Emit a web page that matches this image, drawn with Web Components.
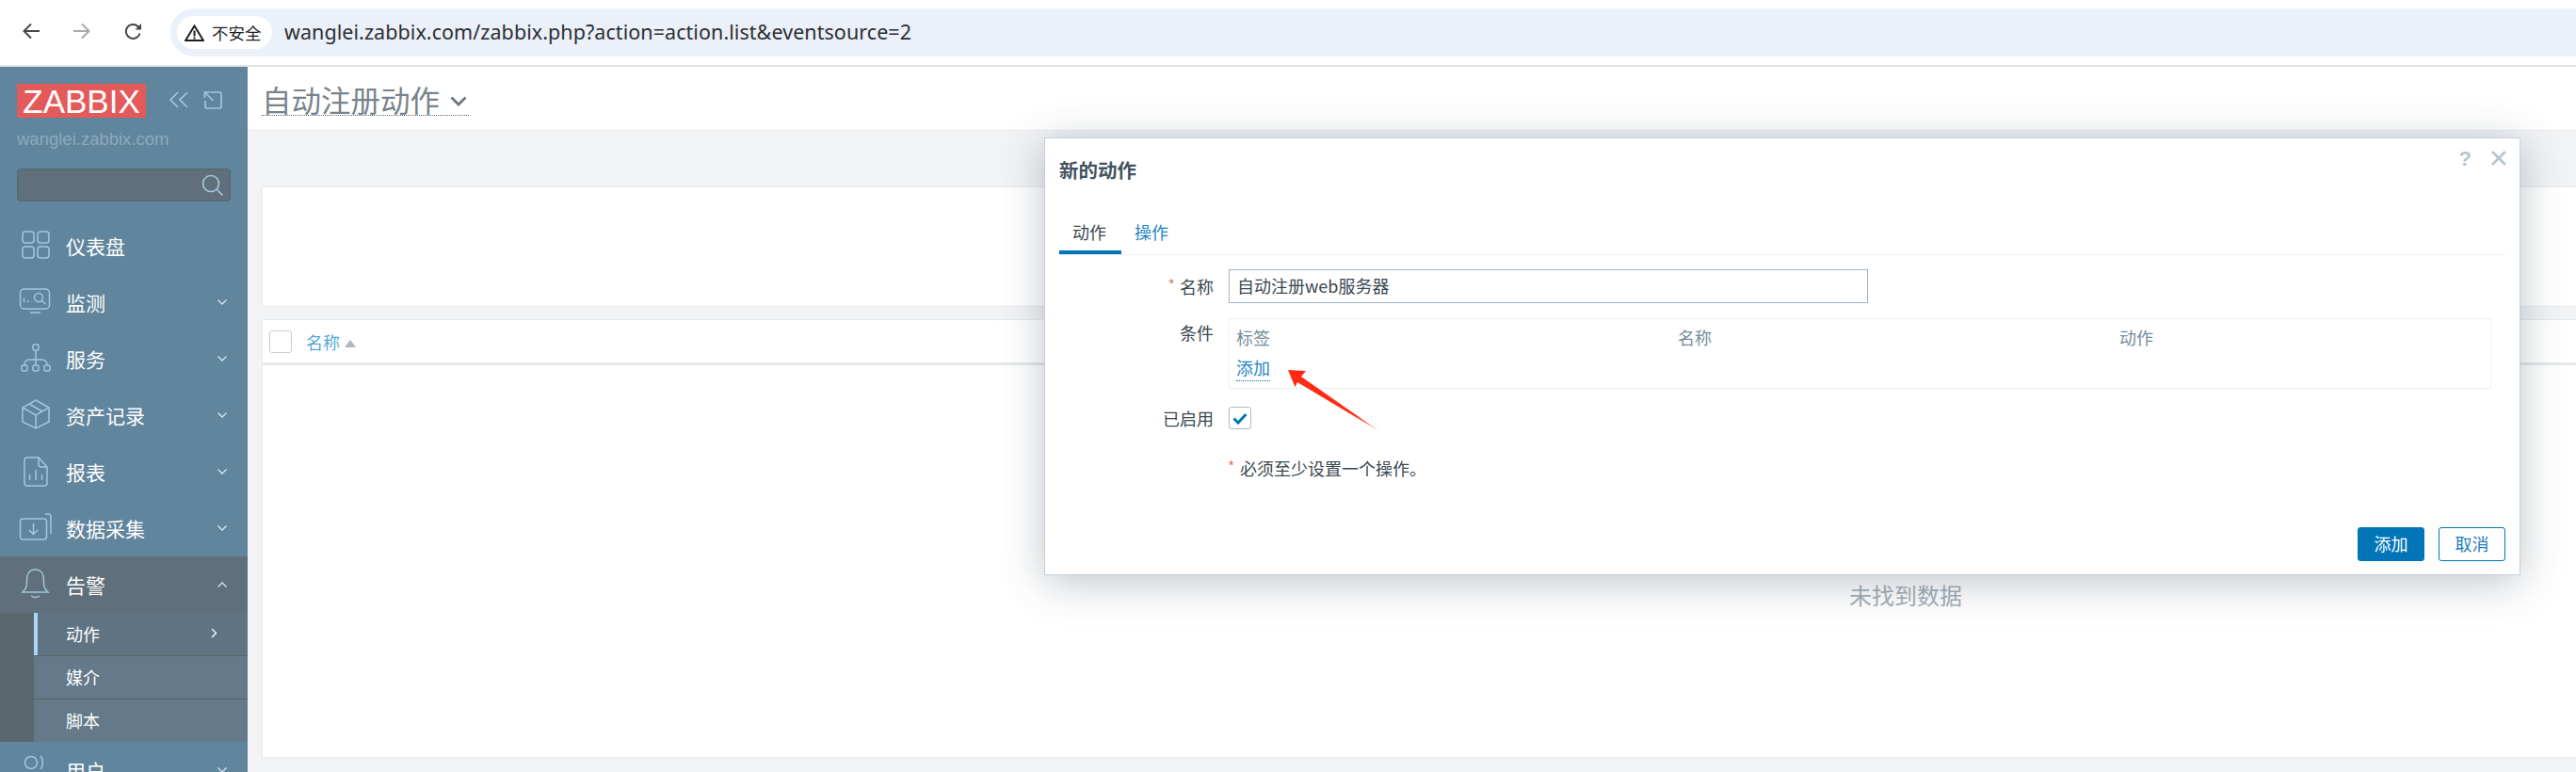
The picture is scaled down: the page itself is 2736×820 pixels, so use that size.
<!DOCTYPE html>
<html lang="zh-CN">
<head>
<meta charset="utf-8">
<title>自动注册动作</title>
<style>
html,body{margin:0;padding:0;height:820px;overflow:hidden;background:#fff;font-family:"Liberation Sans","Noto Sans CJK SC",sans-serif;}
.app{display:flex;flex-direction:column;height:820px;position:relative;overflow:hidden;}
.row{display:flex;flex:1;min-height:0;}
</style>
</head>
<body>
<div class="app">
  <browser-bar url="wanglei.zabbix.com/zabbix.php?action=action.list&amp;eventsource=2"></browser-bar>
  <div class="row">
    <zbx-sidebar>
      <nav-item label="仪表盘" nochev><svg slot="icon" viewBox="0 0 36 36"><rect x="5" y="3" width="12" height="12" rx="3"/><rect x="21" y="3" width="12" height="12" rx="3"/><rect x="5" y="19" width="12" height="12" rx="3"/><rect x="21" y="19" width="12" height="12" rx="3"/></svg></nav-item>
      <nav-item label="监测"><svg slot="icon" viewBox="0 0 36 36"><rect x="2.5" y="4" width="31" height="21" rx="4"/><path d="M13 29h11M6.500 18v-4M10.500 18v-2M14.500 18v-.5"/><circle cx="22" cy="13" r="4.500"/><path d="M25.500 16.500l4 3.500"/></svg></nav-item>
      <nav-item label="服务"><svg slot="icon" viewBox="0 0 36 36"><rect x="16" y="3" width="6" height="6" rx="1.500"/><rect x="4" y="25" width="6" height="6" rx="1.500"/><rect x="16" y="25" width="6" height="6" rx="1.500"/><rect x="28" y="25" width="6" height="6" rx="1.500"/><path d="M19 9v16M7 25v-1a5 5 0 0 1 5-5h14a5 5 0 0 1 5 5v1"/></svg></nav-item>
      <nav-item label="资产记录"><svg slot="icon" viewBox="0 0 36 36"><path d="M19 2l14 8v15l-14 7-14-7V10zM5 10l14 8 14-8M19 18v14M12 6l14 8"/></svg></nav-item>
      <nav-item label="报表"><svg slot="icon" viewBox="0 0 36 36"><path d="M10 3h12l9 10v17a3 3 0 0 1-3 3H10a3 3 0 0 1-3-3V6a3 3 0 0 1 3-3zM22 3v7a3 3 0 0 0 3 3h6M12.500 21v6M19 16v11M25.500 21v6"/></svg></nav-item>
      <nav-item label="数据采集"><svg slot="icon" viewBox="0 0 36 36"><rect x="2.500" y="8" width="28" height="22" rx="3"/><path d="M16.500 13v11M12 20l4.500 4.500L21 20M29 3h3a3 3 0 0 1 3 3v18"/></svg></nav-item>
      <nav-item label="告警" open><svg slot="icon" viewBox="0 0 36 36"><path d="M18.500 2c-6.500 0-9 5-9 10.500V17c0 4-2.500 7-4.500 9h27c-2-2-4.500-5-4.500-9v-4.500C27.500 7 25 2 18.500 2zM14 30q4.500 3 9 0"/></svg>
        <sub-item slot="sub" selected>动作</sub-item>
        <sub-item slot="sub">媒介</sub-item>
        <sub-item slot="sub">脚本</sub-item>
      </nav-item>
      <nav-item label="用户"><svg slot="icon" viewBox="0 0 36 36"><circle cx="14" cy="10" r="6.500"/><path d="M24 3c3 3 3 11 0 14"/></svg></nav-item>
    </zbx-sidebar>
    <zbx-page heading="自动注册动作" empty="未找到数据"></zbx-page>
  </div>
  <zbx-modal heading="新的动作"></zbx-modal>
  <red-arrow></red-arrow>
</div>
<script>
function def(name, css, html, init){
  customElements.define(name, class extends HTMLElement{
    connectedCallback(){
      if(this.shadowRoot) return;
      const r=this.attachShadow({mode:'open'});
      r.innerHTML='<style>'+css+'</style>'+(typeof html==='function'?html(this):html);
      if(init) init(this,r);
    }
  });
}
const attr=(s)=>String(s||'').replace(/&/g,'&amp;').replace(/</g,'&lt;');

def('browser-bar',`
:host{display:flex;align-items:center;height:71px;box-sizing:border-box;border-bottom:2px solid #e2e2e2;background:#fff;flex:none;padding-left:24px;padding-bottom:3px;}
svg{display:block;flex:none}
.nav{display:flex;align-items:center;gap:36px;margin-right:30px}
.pill{flex:1;height:51px;background:#ebf0f9;border-radius:25px 0 0 25px;display:flex;align-items:center;padding-left:7px;margin-top:3px}
.chip{display:flex;align-items:center;height:35px;width:101px;background:#fff;border-radius:18px;box-sizing:border-box;padding-left:8px;gap:8px;font:17.500px "Noto Sans CJK SC",sans-serif;color:#1f1f1f}
.url{margin-left:13px;margin-top:-2px;font:21.500px "Noto Sans","Liberation Sans",sans-serif;letter-spacing:.06px;color:#2c2f33;white-space:nowrap}
`,(h)=>`
<div class="nav">
<svg width="18" height="18" viewBox="0 0 18 18" fill="none" stroke="#474747" stroke-width="2"><path d="M18 9H2M9 1.500L1.500 9 9 16.500"/></svg>
<svg width="18" height="18" viewBox="0 0 18 18" fill="none" stroke="#a9a9a9" stroke-width="2"><path d="M0 9h16M9 1.500L16.500 9 9 16.500"/></svg>
<svg width="19" height="19" viewBox="0 0 19 19" fill="none" stroke="#474747" stroke-width="2"><path d="M16.500 11.500A7.500 7.500 0 1 1 14.500 4L17 6.500"/><path d="M18 1v6.500h-6.500" fill="#474747" stroke="none"/></svg>
</div>
<div class="pill"><div class="chip">
<svg width="21" height="18" viewBox="0 0 21 18"><path d="M10.500 1.500L20 17H1z" fill="none" stroke="#1f1f1f" stroke-width="2"/><path d="M9.500 6.500h2v6h-2zM9.500 13.500h2v2h-2z" fill="#1f1f1f"/></svg>
<span>不安全</span></div><span class="url">${attr(h.getAttribute('url'))}</span></div>`);

def('zbx-sidebar',`
:host{display:flex;flex-direction:column;width:263px;flex:none;background:#60859d;overflow:hidden;box-sizing:border-box;padding-top:18px;height:749px}
.top,.host,.search,::slotted(*){flex:none}
.top{display:flex;align-items:flex-start;padding-left:18px}
.logo{width:137px;height:36px;background:#e45959;color:#fff;font:35px/37px "Liberation Sans",sans-serif;text-align:center;flex:none}
.tools{display:flex;gap:15px;margin:8px 0 0 24px}
svg{display:block;fill:none;stroke:#a3c6dd;stroke-width:1.700}
.host{font:18.500px/24px "Liberation Sans",sans-serif;color:#8fa9bc;padding:11px 0 0 18px}
.search{height:35px;width:227px;margin:19px 0 17px 18px;box-sizing:border-box;background:#5f6f7b;border:1px solid #566671;border-radius:4px;display:flex;justify-content:flex-end;align-items:center;padding-right:7px}
`,`
<div class="top"><div class="logo">ZABBIX</div><div class="tools">
<svg width="22" height="18" viewBox="0 0 22 18"><path d="M10 1L2 9l8 8M20 1l-8 8 8 8"/></svg>
<svg width="20" height="19" viewBox="0 0 20 19"><path d="M8 1h9a2 2 0 0 1 2 2v13a2 2 0 0 1-2 2H4a2 2 0 0 1-2-2v-6M1.500 1l9 9M1.500 7V1h6"/></svg>
</div></div>
<div class="host">wanglei.zabbix.com</div>
<div class="search"><svg width="23" height="23" viewBox="0 0 23 23"><circle cx="10" cy="10" r="8.500"/><path d="M16 16l6.500 6.500"/></svg></div>
<slot></slot>`);

def('nav-item',`
:host{display:block;flex:none;color:#fff}
.r{display:flex;align-items:center;height:60px;padding-left:19px;box-sizing:border-box;font:21px/30px "Noto Sans CJK SC",sans-serif}
:host([open]) .r{background:#5f6f7b}
.i{width:36px;height:36px;flex:none;margin-right:15px}
::slotted(svg){display:block;width:36px;height:36px;fill:none;stroke:#a3c6dd;stroke-width:1.500}
.l{flex:1}
.c{width:10px;height:6px;margin-right:22px;fill:none;stroke:#d9e6ee;stroke-width:1.300}
.s{background:#5b676e;padding-left:36px}
`,(h)=>`
<div class="r"><span class="i"><slot name="icon"></slot></span><span class="l">${attr(h.getAttribute('label'))}</span>
${h.hasAttribute('nochev')?'':`<svg class="c" viewBox="0 0 10 6"><path d="${h.hasAttribute('open')?'M.5 5.500L5 1l4.500 4.500':'M.5.500L5 5 9.500.500'}"/></svg>`}</div>
<div class="s"><slot name="sub"></slot></div>`);

def('sub-item',`
:host{display:flex;align-items:center;height:46px;box-sizing:border-box;background:#647a8a;color:#fff;font:18px/26px "Noto Sans CJK SC",sans-serif;padding-left:34px;border-top:1px solid #5c6367;padding-bottom:2px}
:host(:first-child),:host([selected]){background:#5f7383;border-top:0;border-left:4px solid #a9d6f5;padding-left:30px;height:45px}
svg{margin-left:auto;margin-right:32px;fill:none;stroke:#e8f0f5;stroke-width:1.500}
`,(h)=>`<slot></slot>${h.hasAttribute('selected')?'<svg width="7" height="11" viewBox="0 0 7 11"><path d="M1 1l4.500 4.500L1 10"/></svg>':''}`);

def('zbx-page',`
:host{display:block;flex:1;min-width:0;background:#f2f3f5;overflow:hidden}
.head{height:68px;box-sizing:border-box;background:#fff;border-bottom:1px solid #e8eaec;padding:17px 0 0 15px}
.t{display:inline-flex;align-items:center;height:35px;width:220px;box-sizing:border-box;border-bottom:1px dotted #5f6b73;font:31.500px/34px "Noto Sans CJK SC",sans-serif;color:#78838b;white-space:nowrap}
.t svg{margin:4px 0 0 11px;fill:none;stroke:#6d7880;stroke-width:2.800}
.panel{width:3492px;margin-left:15px;box-sizing:border-box;background:#fff;border:1px solid #e8eaec}
.filter{height:128px;margin-top:59px;margin-bottom:13px}
.table{height:466px}
.th{height:45px;display:flex;align-items:center;padding-left:7px;border-bottom:3px solid #e5e8ea;font:18px/26px "Noto Sans CJK SC",sans-serif;color:#55a8d8;box-sizing:content-box}
.cb{width:24px;height:24px;box-sizing:border-box;border:1px solid #c4cfd6;border-radius:3px;background:#fff;margin-right:15px}
.tri{width:0;height:0;border:6px solid transparent;border-top:0;border-bottom:8px solid #adb8bf;margin-left:5px;margin-top:4px}
.none{text-align:center;padding-top:226px;font:24px/36px "Noto Sans CJK SC",sans-serif;color:#a4afb7}
`,(h)=>`
<div class="head"><div class="t">${attr(h.getAttribute('heading'))}<svg width="18" height="11" viewBox="0 0 18 11"><path d="M1.500 1.500L9 9l7.500-7.500"/></svg></div></div>
<div class="panel filter"></div>
<div class="panel table"><div class="th"><span class="cb"></span><span>名称</span><span class="tri"></span></div><div class="none">${attr(h.getAttribute('empty'))}</div></div>`);

def('zbx-modal',`
:host{position:absolute;left:1109px;top:146px;width:1568px;height:465px;box-sizing:border-box;background:#fff;border:1px solid #c6d0d7;box-shadow:0 7px 42px rgba(40,60,75,.3);display:flex;flex-direction:column;color:#3b4850;font:18px/26px "Noto Sans CJK SC",sans-serif}
.hd{display:flex;justify-content:space-between;padding:18px 13px 0 15px;height:61px;box-sizing:border-box}
h2{margin:0;font:700 20.500px/30px "Noto Sans CJK SC",sans-serif;color:#42535f}
.acts{display:flex;gap:20px;align-items:flex-start;margin-top:-8px}
.q{font:700 22px/24px "Liberation Sans",sans-serif;color:#b9c5cc}
.acts svg{margin-top:2px;fill:none;stroke:#b9c5cc;stroke-width:2.800}
.tabs{display:flex;margin:18px 15px 0 15px;border-bottom:1px solid #ebeef0;height:45px;box-sizing:border-box}
.tab{width:66px;text-align:center;height:44px;box-sizing:border-box;line-height:41px;padding-right:2px;white-space:nowrap}
.tab.on{color:#3b4850;border-bottom:4px solid #0275b8}
.tab+.tab{margin-left:14px;width:36px;padding-right:0;color:#1f86c4}
.form{display:grid;grid-template-columns:164px 1fr;column-gap:16px;margin:15px 30px 0 15px}
.lb{text-align:right;white-space:nowrap;display:flex;justify-content:flex-end;align-items:center;height:36px}
.lb i{color:#e45959;font:normal 14px/14px "Liberation Sans",sans-serif;margin-right:6px;margin-top:-6px}
.inp{width:679px;height:36px;box-sizing:border-box;border:1px solid #a4b3bf;padding-left:8px;line-height:33px;color:#3b4850;background:#fff}
.cond{margin:16px 0 19px;height:75px;box-sizing:border-box;border:1px solid #ebeef1;padding:0 7px;}
.cols{display:grid;grid-template-columns:469px 469px 1fr;height:36px;line-height:38px;color:#768d99}
.lnk{display:inline-block;color:#1f86c4;border-bottom:1px dotted #0275b8;line-height:25px;height:26px;margin-top:3px}
.cond-l{margin-top:18px;height:36px;align-items:flex-start}
.en{margin-top:0;height:24px}
.ck{width:24px;height:24px;box-sizing:border-box;border:1px solid #a9b7c2;border-radius:3px;display:flex;align-items:center;justify-content:center}
.ck svg{fill:none;stroke:#0275b8;stroke-width:3}
.note{grid-column:2;margin-top:28px;display:flex;align-items:center;height:26px}
.note i{color:#e45959;font:normal 14px/14px "Liberation Sans",sans-serif;margin-right:6px;margin-top:-6px;width:6px}
.ft{margin-top:auto;display:flex;justify-content:flex-end;gap:15px;padding:0 15px 14px 0}
.b{width:71px;height:36px;box-sizing:border-box;border:1px solid #0275b8;border-radius:3px;text-align:center;line-height:33px;color:#1f7fbd;background:#fff}
.b.p{background:#0275b8;color:#fff}
`,(h)=>`
<div class="hd"><h2>${attr(h.getAttribute('heading'))}</h2><div class="acts"><span class="q">?</span><svg width="18" height="18" viewBox="0 0 18 18"><path d="M2 2l14 14M16 2L2 16"/></svg></div></div>
<div class="tabs"><div class="tab on">动作</div><div class="tab">操作</div></div>
<div class="form">
  <div class="lb"><i>*</i>名称</div><div class="inp">自动注册web服务器</div>
  <div class="lb cond-l">条件</div>
  <div class="cond"><div class="cols"><span>标签</span><span>名称</span><span>动作</span></div><span class="lnk">添加</span></div>
  <div class="lb en">已启用</div><div class="ck"><svg width="16" height="13" viewBox="0 0 16 13"><path d="M1.500 6.500l4.500 4.500L14.500 2"/></svg></div>
  <div class="note"><i>*</i><span>必须至少设置一个操作。</span></div>
</div>
<div class="ft"><div class="b p">添加</div><div class="b">取消</div></div>`);

def('red-arrow',`
:host{position:absolute;left:1360px;top:385px;width:110px;height:80px;pointer-events:none}
svg{display:block}
`,`<svg width="110" height="80" viewBox="0 0 110 80"><defs><linearGradient id="g" x1="8" y1="8" x2="105" y2="73" gradientUnits="userSpaceOnUse"><stop offset="0" stop-color="#ff2a14"/><stop offset=".75" stop-color="#ff2a14"/><stop offset="1" stop-color="#ffb0a0"/></linearGradient></defs><path d="M8 8L27 9 22 15 105 73 18 21 15.500 26z" fill="url(#g)"/></svg>`);
</script>
</body>
</html>
